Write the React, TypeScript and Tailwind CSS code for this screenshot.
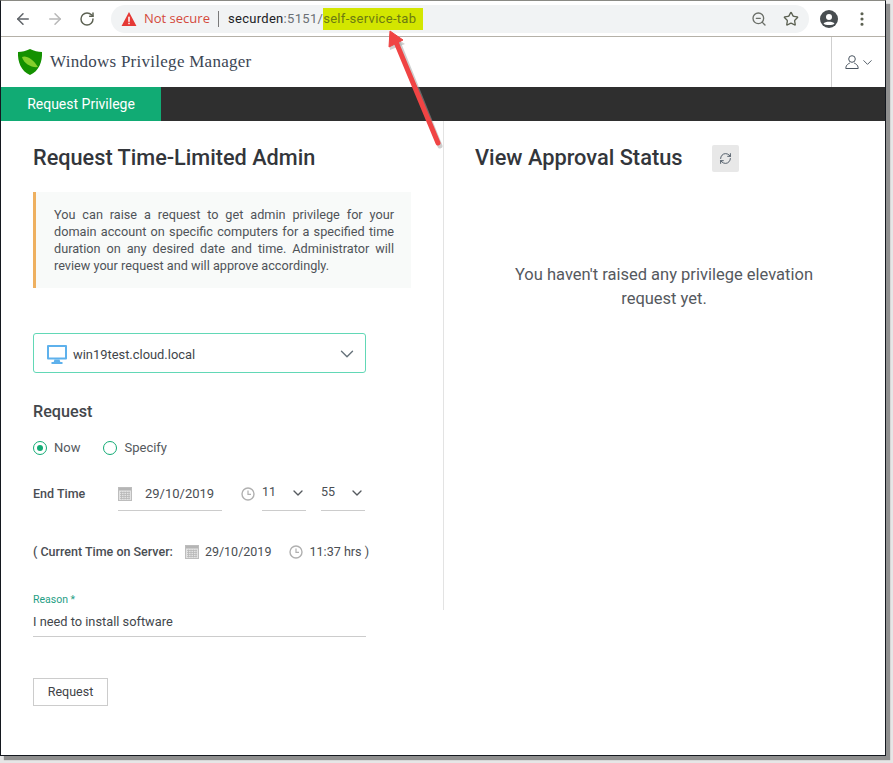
import React from 'react';
import { ArrowLeft, ArrowRight, RotateCw, ZoomOut, Star, MoreVertical, ChevronDown, RefreshCw } from 'lucide-react';

const CalendarIcon = ({ className }: { className?: string }) => (
  <svg viewBox="0 0 14 14" className={className}>
    <rect x="0.5" y="0.5" width="13" height="13" fill="#e2e2e2" stroke="#bdbdbd" />
    <rect x="1" y="1" width="12" height="2.5" fill="#b5b5b5" />
    <path d="M2 5.5h10M2 7.5h10M2 9.5h10M2 11.5h10M3.5 4.5v8M6 4.5v8M8.500 4.5v8M11 4.5v8" stroke="#b8b8b8" strokeWidth="0.8" />
  </svg>
);

const ClockIcon = ({ className }: { className?: string }) => (
  <svg viewBox="0 0 14 14" className={className} fill="none">
    <circle cx="7" cy="7" r="6" stroke="#b0b0b0" strokeWidth="1.4" />
    <path d="M7 3.5V7.4H10" stroke="#b0b0b0" strokeWidth="1.2" />
  </svg>
);

const ShieldLogo = () => (
  <svg viewBox="0 0 28 28" className="w-[28px] h-[28px]">
    <path d="M14 1C10 3 6 4 2 4C1.500 14 5 23 14 27C23 23 26.500 14 26 4C22 4 18 3 14 1Z" fill="#149100" />
    <path d="M6 9C10 7 17 11 22 19C16 20 8 16 6 9Z" fill="#84cf2c" />
  </svg>
);

const ComputerIcon = () => (
  <svg viewBox="0 0 20 19" className="w-[20px] h-[19px] mt-[2px]">
    <rect x="0" y="0" width="20" height="14.500" rx="1" fill="#5eb1ec" />
    <rect x="2" y="2" width="16" height="10.500" fill="#ffffff" />
    <path d="M7.500 14.500H12.500L13.500 17.500H6.500Z" fill="#5eb1ec" />
    <rect x="4.500" y="17" width="11" height="2" fill="#5eb1ec" />
  </svg>
);

const UserOutline = () => (
  <svg viewBox="0 0 14 14" className="w-[14px] h-[14px]" fill="none" stroke="#4a5560" strokeWidth="1">
    <circle cx="7" cy="4" r="3.300" />
    <path d="M0.800 13.500C0.800 9.500 4 8.500 5 8M13.200 13.500C13.200 9.500 10 8.500 9 8M0.800 13.500H13.200" />
  </svg>
);

const Underlined = ({ children, className }: { children: React.ReactNode; className?: string }) => (
  <div className={`flex items-center border-b border-[#cccccc] h-[34px] ${className ?? ''}`}>{children}</div>
);

export default function App() {
  return (
    <div className="relative w-[893px] h-[763px] bg-[#e6e6e6] overflow-hidden" style={{ fontFamily: 'Roboto, sans-serif' }}>
      <div className="w-[886px] h-[756px] bg-white border-x border-b border-t border-x-[#14181f] border-b-[#14181f] border-t-[#8a8a84] shadow-[4px_4px_1px_#8f8f8f] flex flex-col">
        {/* Browser toolbar */}
        <div className="h-[36px] shrink-0 flex items-center border-b border-[#b5b1a8] bg-white">
          <ArrowLeft className="w-[18px] h-[18px] ml-[13px] text-[#5f6368]" strokeWidth={2} />
          <ArrowRight className="w-[18px] h-[18px] ml-[14px] text-[#b8b8b8]" strokeWidth={2} />
          <RotateCw className="w-[16px] h-[16px] ml-[15px] text-[#5c6152]" strokeWidth={2.2} />
          <div className="ml-[16px] w-[698px] h-[28px] rounded-full bg-[#f1f3f4] flex items-center pl-[10px] pr-[10px]">
            <svg viewBox="0 0 16 15" className="w-[16px] h-[14px]">
              <path d="M8 0L16 15H0Z" fill="#e53935" />
              <rect x="7.200" y="5" width="1.600" height="5.500" fill="#fff" />
              <rect x="7.200" y="11.500" width="1.600" height="1.600" fill="#fff" />
            </svg>
            <span className="ml-[7px] text-[#d4493b]" style={{ fontFamily: 'Open Sans, sans-serif', fontSize: 13 }}>Not secure</span>
            <div className="ml-[8px] w-px h-[16px] bg-[#7a7a7a]" />
            <span className="ml-[9px] text-[13px] tracking-[0.3px] text-[#202124]">securden<span className="text-[#6b7075]">:5151/</span></span>
            <span className="bg-[#d3e600] text-[13px] tracking-[0.3px] text-[#6b7a12] h-[22px] leading-[22px] w-[100px]">self-service-tab</span>
            <ZoomOut className="ml-auto w-[16px] h-[16px] text-[#6b6f68]" strokeWidth={2} />
            <Star className="ml-[16px] w-[16px] h-[16px] text-[#5c6152]" strokeWidth={2} />
          </div>
          <svg viewBox="0 0 18 18" className="ml-[11px] w-[18px] h-[18px]">
            <circle cx="9" cy="9" r="9" fill="#484d50" />
            <circle cx="9" cy="7" r="3" fill="#fff" />
            <path d="M3.500 13.500C5 11 13 11 14.500 13.500C13 15.500 5 15.500 3.500 13.500Z" fill="#fff" />
          </svg>
          <MoreVertical className="ml-[15px] w-[18px] h-[18px] text-[#5c6152]" strokeWidth={2.2} />
        </div>

        {/* App header */}
        <div className="h-[50px] shrink-0 flex items-center">
          <div className="ml-[15px] mt-[-1px]"><ShieldLogo /></div>
          <span className="ml-[6px] text-[17px] text-[#3c4654] tracking-[0.27px]" style={{ fontFamily: 'Liberation Serif, serif' }}>Windows Privilege Manager</span>
          <div className="ml-auto w-[54px] h-full border-l border-[#cfcfcf] flex items-center pl-[13px]">
            <UserOutline />
            <ChevronDown className="ml-[1px] w-[15px] h-[15px] text-[#4a5560]" strokeWidth={1.500} />
          </div>
        </div>

        {/* Nav */}
        <div className="h-[34px] shrink-0 bg-[#2f2f2f] flex">
          <div className="w-[160px] bg-[#11ab74] text-white text-[14px] flex items-center justify-center">Request Privilege</div>
        </div>

        {/* Content */}
        <div className="flex items-start">
          <div className="w-[443px] h-[489px] shrink-0 border-r border-[#e3e3e3] pl-[32px]">
            <h1 className="mt-[22px] text-[21.700px] leading-[30px] font-medium text-[#33363b]">Request Time-Limited Admin</h1>
            <div className="mt-[19px] w-[378px] h-[96px] bg-[#f8faf9] border-l-[3px] border-[#eeb060] pl-[18px] pr-[17px] pt-[14px] text-[12.700px] leading-[17px] text-[#4f5358] text-justify">
              You can raise a request to get admin privilege for your domain account on specific computers for a specified time duration on any desired date and time. Administrator will review your request and will approve accordingly.
            </div>

            <div className="mt-[45px] w-[333px] h-[40px] border border-[#62d8b6] rounded-[3px] flex items-center pl-[13px] pr-[7px]">
              <ComputerIcon />
              <span className="ml-[6px] mt-[3px] text-[12.900px] text-[#41454a]">win19test.cloud.local</span>
              <ChevronDown className="ml-auto mt-[1px] w-[22px] h-[22px] text-[#66727a]" strokeWidth={1.500} />
            </div>

            <div className="mt-[29px] text-[16.200px] leading-[20px] font-medium text-[#43474c]">Request</div>

            <div className="mt-[16px] flex items-center h-[20px] text-[13px] text-[#55595e]">
              <span className="w-[14px] h-[14px] rounded-full border border-[#11ab74] flex items-center justify-center">
                <span className="w-[6px] h-[6px] rounded-full bg-[#11ab74]" />
              </span>
              <span className="ml-[7px]">Now</span>
              <span className="ml-[23px] w-[14px] h-[14px] rounded-full border border-[#11ab74]" />
              <span className="ml-[7px]">Specify</span>
            </div>

            <div className="mt-[19px] flex items-start text-[12.500px] text-[#4a4e53]">
              <span className="w-[85px] h-[34px] flex items-center font-medium">End Time</span>
              <Underlined className="w-[104px]">
                <CalendarIcon className="w-[14px] h-[14px]" />
                <span className="ml-[13px] text-[13px]">29/10/2019</span>
              </Underlined>
              <div className="ml-[19px] w-[16px] h-[34px] flex items-center"><ClockIcon className="w-[14px] h-[14px]" /></div>
              <Underlined className="ml-[5px] w-[44px] justify-between">
                <span className="mt-[-2px]">11</span>
                <ChevronDown className="w-[16px] h-[16px] mt-[-2px] text-[#555a5f]" strokeWidth={2} />
              </Underlined>
              <Underlined className="ml-[15px] w-[44px] justify-between">
                <span className="mt-[-2px]">55</span>
                <ChevronDown className="w-[16px] h-[16px] mt-[-2px] text-[#555a5f]" strokeWidth={2} />
              </Underlined>
            </div>

            <div className="mt-[31px] flex items-center h-[20px] text-[12.500px] font-medium text-[#4a4e53]">
              <span>( Current Time on Server:</span>
              <CalendarIcon className="ml-[12px] w-[14px] h-[14px]" />
              <span className="ml-[6px] font-normal">29/10/2019</span>
              <ClockIcon className="ml-[18px] w-[14px] h-[14px]" />
              <span className="ml-[6px] font-normal text-[12.600px]">11:37 hrs )</span>
            </div>

            <div className="mt-[31px] text-[10.500px] leading-[14px] text-[#1f9e85]">Reason *</div>
            <div className="mt-[6px] w-[333px] h-[24px] border-b border-[#cccccc] text-[12.800px] leading-[18px] text-[#43474c]">I need to install software</div>

            <button className="mt-[41px] w-[75px] h-[28px] pt-[1px] border border-[#cccccc] bg-white text-[12.500px] text-[#3f4347]">Request</button>
          </div>

          <div className="flex-1 pl-[31px]">
            <div className="mt-[22px] flex items-center h-[30px]">
              <h2 className="text-[21.800px] leading-[30px] font-medium text-[#33363b]">View Approval Status</h2>
              <div className="ml-[30px] mt-[1px] w-[27px] h-[27px] rounded-[2px] bg-[#e8e8e8] flex items-center justify-center">
                <RefreshCw className="w-[13px] h-[13px] text-[#3d4a58]" strokeWidth={1.600} />
              </div>
            </div>
            <p className="mt-[90px] ml-[16px] w-[346px] text-center text-[16.500px] leading-[24px] text-[#55595e]">
              You haven't raised any privilege elevation request yet.
            </p>
          </div>
        </div>
      </div>

      {/* Red annotation arrow */}
      <svg viewBox="0 0 893 763" className="absolute inset-0 w-[893px] h-[763px] pointer-events-none">
        <line x1="440" y1="146" x2="398" y2="42" stroke="#a0a0a0" strokeWidth="5" strokeLinecap="round" opacity="0.5" />
        <path d="M389 34L405 44L390 50Z" fill="#a0a0a0" opacity="0.5" />
        <line x1="438" y1="143" x2="396" y2="42" stroke="#f04444" strokeWidth="5" strokeLinecap="round" />
        <path d="M390 31L403 40L389 47Z" fill="#f04444" stroke="#f04444" strokeWidth="1" strokeLinejoin="round" />
      </svg>
    </div>
  );
}
